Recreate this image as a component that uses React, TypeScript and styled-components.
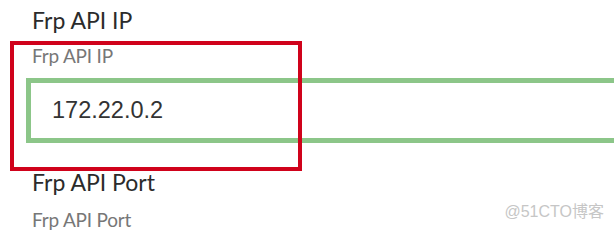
import React from "react";
import styled, { createGlobalStyle } from "styled-components";

const Global = createGlobalStyle`
  html, body { margin: 0; padding: 0; background: #ffffff; }
  body { width: 614px; height: 232px; overflow: hidden; }
`;

const Page = styled.div`
  position: relative;
  width: 614px;
  height: 232px;
  overflow: hidden;
  padding: 6px 0 0 26px;
  box-sizing: border-box;
  font-family: Lato, "Noto Sans", sans-serif;
`;

const Field = styled.section<{ $gap?: number }>`
  position: relative;
  display: flex;
  flex-direction: column;
  margin-top: ${(p) => p.$gap ?? 0}px;
`;

const Title = styled.h3`
  margin: 0;
  padding-left: 6px;
  font-size: 23px;
  line-height: 28px;
  font-weight: 400;
  color: #2b2b2b;
`;

const Hint = styled.p<{ $top: number }>`
  margin: ${(p) => p.$top}px 0 0;
  padding-left: 6px;
  font-size: 19px;
  line-height: 23px;
  letter-spacing: -0.2px;
  color: #777777;
`;

const TextInput = styled.input`
  margin: 11px -40px 0 0;
  height: 65px;
  box-sizing: border-box;
  border: 5px solid #8cc689;
  border-radius: 0;
  outline: none;
  padding: 0 0 0 21px;
  font-family: "Liberation Sans", Arial, sans-serif;
  font-size: 23.5px;
  color: #333333;
  background: #ffffff;
`;

const Annotation = styled.div`
  position: absolute;
  left: -16px;
  top: 35px;
  width: 292px;
  height: 130px;
  box-sizing: border-box;
  border: 4px solid #d0021b;
  pointer-events: none;
`;

const Watermark = styled.span`
  position: absolute;
  right: 10px;
  top: 204px;
  font-family: "Liberation Sans", "Noto Sans CJK SC", sans-serif;
  font-size: 16px;
  line-height: 16px;
  color: #c6c6c6;
`;

export default function App() {
  return (
    <>
      <Global />
      <Page>
        <Field>
          <Title>Frp API IP</Title>
          <Hint $top={10}>Frp API IP</Hint>
          <TextInput defaultValue="172.22.0.2" />
          <Annotation />
        </Field>
        <Field $gap={25}>
          <Title>Frp API Port</Title>
          <Hint $top={12}>Frp API Port</Hint>
        </Field>
        <Watermark>@51CTO博客</Watermark>
      </Page>
    </>
  );
}
